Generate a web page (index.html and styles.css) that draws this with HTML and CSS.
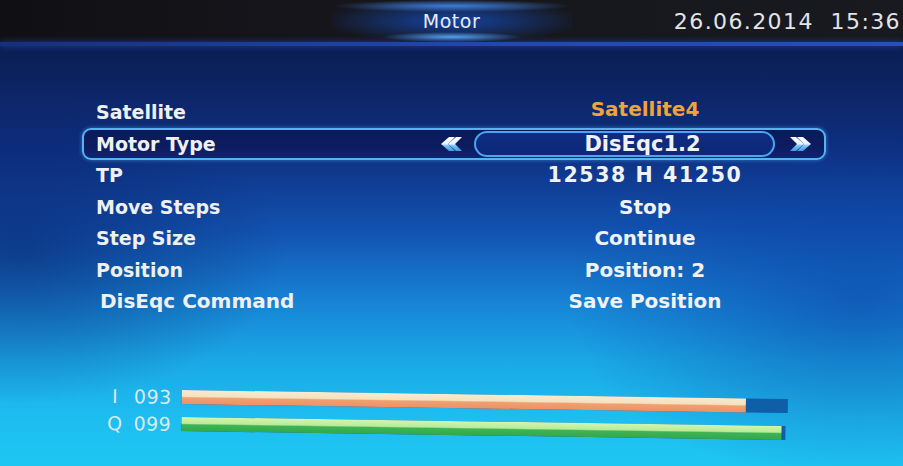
FILE: index.html
```html
<!DOCTYPE html>
<html>
<head>
<meta charset="utf-8">
<link rel="stylesheet" href="styles.css">
</head>
<body>
<div class="screen">
  <header class="header">
    <div class="side"></div>
    <div class="title">Motor</div>
    <div class="side clock">26.06.2014&nbsp;&nbsp;15:36</div>
  </header>
  <div class="rule"></div>
  <main class="menu">
    <div class="row">
      <span class="label">Satellite</span>
      <span class="value sat">Satellite4</span>
    </div>
    <div class="row active">
      <span class="label">Motor Type</span>
      <svg class="arrow" width="24" height="16" viewBox="0 0 24 16">
        <defs>
          <linearGradient id="ag" x1="0" y1="0" x2="0" y2="1">
            <stop offset="0" stop-color="#ffffff"/>
            <stop offset="0.5" stop-color="#e4f2ff"/>
            <stop offset="0.62" stop-color="#7cc4f4"/>
            <stop offset="1" stop-color="#3c9ae8"/>
          </linearGradient>
        </defs>
        <polygon points="1,8 9,1 15,1 8,8 15,15 9,15" fill="url(#ag)"/>
        <polygon points="8,8 16,1 22,1 15,8 22,15 16,15" fill="url(#ag)"/>
      </svg>
      <span class="pill">DisEqc1.2</span>
      <svg class="arrow right" width="24" height="16" viewBox="0 0 24 16">
        <polygon points="23,8 15,1 9,1 16,8 9,15 15,15" fill="url(#ag)"/>
        <polygon points="16,8 8,1 2,1 9,8 2,15 8,15" fill="url(#ag)"/>
      </svg>
    </div>
    <div class="row">
      <span class="label">TP</span>
      <span class="value tp">12538 H 41250</span>
    </div>
    <div class="row">
      <span class="label">Move Steps</span>
      <span class="value">Stop</span>
    </div>
    <div class="row">
      <span class="label">Step Size</span>
      <span class="value">Continue</span>
    </div>
    <div class="row">
      <span class="label">Position</span>
      <span class="value">Position: 2</span>
    </div>
    <div class="row">
      <span class="label wide">DisEqc Command</span>
      <span class="value">Save Position</span>
    </div>
  </main>
  <section class="meters">
    <div class="meter">
      <span class="m-name">I</span>
      <span class="m-val">093</span>
      <div class="track i-track"><div class="fill i-fill" style="width:93%"></div></div>
    </div>
    <div class="meter">
      <span class="m-name">Q</span>
      <span class="m-val">099</span>
      <div class="track q-track"><div class="fill q-fill" style="width:99.3%"></div></div>
    </div>
  </section>
</div>
</body>
</html>
```
FILE: styles.css
```css
* { box-sizing: border-box; }
html, body {
  margin: 0;
  padding: 0;
  width: 903px;
  height: 466px;
  overflow: hidden;
  background: #0b1a48;
}
.screen {
  width: 903px;
  height: 466px;
  display: flex;
  flex-direction: column;
  font-family: "DejaVu Sans", "Liberation Sans", sans-serif;
  color: #eef2f6;
  background:
    radial-gradient(ellipse 420px 260px at 860px 300px, rgba(10, 60, 160, 0.55), rgba(10, 60, 160, 0) 70%),
    radial-gradient(ellipse 380px 220px at 20px 250px, rgba(8, 30, 100, 0.55), rgba(8, 30, 100, 0) 70%),
    linear-gradient(to bottom, #0b1640 0px, #0c2058 60px, #0e2f80 150px, #1252b0 230px, #1782d4 300px, #1aa8e6 360px, #1ebef0 420px, #1ec6f2 466px);
}
.header {
  height: 42px;
  display: grid;
  grid-template-columns: 1fr 240px 1fr;
  align-items: center;
  background: linear-gradient(to right, #101014 0%, #16161c 40%, #181a20 100%);
}
.title {
  height: 42px;
  display: flex;
  align-items: center;
  justify-content: center;
  font-size: 19px;
  letter-spacing: 0.5px;
  color: #e8ecf2;
  background:
    radial-gradient(ellipse 70px 5px at 120px 37px, rgba(90, 170, 255, 0.95), rgba(40, 110, 230, 0) 100%),
    radial-gradient(ellipse 120px 6px at 120px 6px, rgba(70, 140, 240, 0.85), rgba(40, 110, 230, 0) 100%),
    radial-gradient(ellipse 130px 22px at 120px 21px, rgba(20, 70, 170, 0.95), rgba(20, 60, 150, 0) 100%);
}
.clock {
  text-align: right;
  font-size: 22px;
  letter-spacing: 1.4px;
  color: #e2e4e8;
  padding-right: 2px;
  white-space: nowrap;
}
.rule {
  height: 4px;
  background: linear-gradient(to right, #16307a 0%, #2146b0 50%, #2450c0 100%);
  box-shadow: 0 0 6px rgba(40, 80, 200, 0.7);
}
.menu {
  padding-top: 50px;
  display: flex;
  flex-direction: column;
}
.row {
  height: 31.5px;
  display: flex;
  align-items: center;
  padding-left: 96px;
  padding-right: 88px;
  font-weight: bold;
}
.label {
  flex: 1;
  font-size: 19px;
  color: #eef0f2;
}
.label.wide { font-size: 20px; padding-left: 4px; }
.value {
  width: 340px;
  text-align: center;
  font-size: 20px;
  color: #f0f2f4;
  white-space: nowrap;
}
.value.sat { color: #f2a238; margin-top: -6px; }
.value.tp { letter-spacing: 1.6px; font-size: 20.5px; }
.row.active {
  margin: 0 77px 0 82px;
  padding: 0 12px 0 12px;
  height: 32px;
  border: 2px solid #55b4f0;
  border-radius: 9px;
  background: linear-gradient(to bottom, #0a1a58 0%, #0c1c60 60%, #0e2470 100%);
  box-shadow: 0 0 4px rgba(80, 170, 240, 0.6);
}
.arrow {
  flex: none;
  margin-right: 10px;
}
.arrow.right {
  margin-right: 0;
  margin-left: 13px;
}
.pill {
  width: 301px;
  height: 26px;
  display: flex;
  align-items: center;
  justify-content: center;
  padding-left: 36px;
  border: 2px solid #4aa6ee;
  border-radius: 13px;
  background: linear-gradient(to bottom, #0e2c82 0%, #0d2878 100%);
  font-size: 21px;
  color: #eef2f6;
}
.meters {
  margin-top: 73px;
  display: flex;
  flex-direction: column;
  gap: 13px;
  padding-left: 104px;
  transform: rotate(0.85deg);
  transform-origin: 180px 0;
}
.meter {
  height: 14px;
  display: flex;
  align-items: center;
  font-size: 19px;
  color: #dfe8ee;
}
.m-name {
  width: 22px;
  text-align: center;
}
.m-val {
  width: 56px;
  padding-left: 8px;
  letter-spacing: 0.5px;
}
.track {
  width: 606px;
  height: 14px;
  background: #0e5ea8;
}
.q-track { width: 604px; }
.fill { height: 100%; }
.i-fill {
  background: linear-gradient(to bottom, #f6ead0 0%, #f4e2c0 45%, #f0a070 55%, #ee9266 100%);
}
.q-fill {
  background: linear-gradient(to bottom, #d4f4b0 0%, #b8ec98 45%, #3cb454 55%, #34a84c 100%);
}
```
